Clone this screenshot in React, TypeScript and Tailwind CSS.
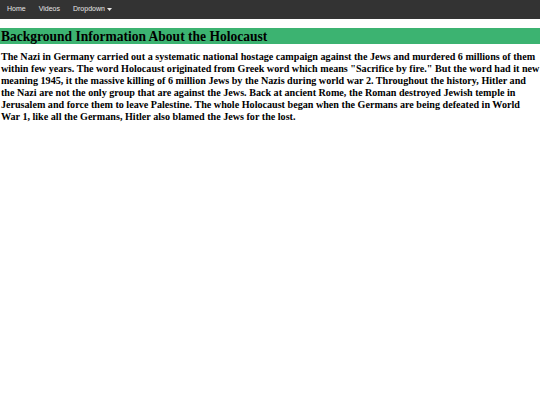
const lines = [
  'The Nazi in Germany carried out a systematic national hostage campaign against the Jews and murdered 6 millions of them',
  'within few years. The word Holocaust originated from Greek word which means "Sacrifice by fire." But the word had it new',
  'meaning 1945, it the massive killing of 6 million Jews by the Nazis during world war 2. Throughout the history, Hitler and',
  'the Nazi are not the only group that are against the Jews. Back at ancient Rome, the Roman destroyed Jewish temple in',
  'Jerusalem and force them to leave Palestine. The whole Holocaust began when the Germans are being defeated in World',
  'War 1, like all the Germans, Hitler also blamed the Jews for the lost.',
];

export default function App() {
  return (
    <div className="min-h-[405px] bg-white overflow-hidden">
      {/* Navbar */}
      <nav className="h-[19px] bg-[#333333] flex items-center px-[7px] gap-[13px] font-['Liberation_Sans',Arial,sans-serif] text-[7px] text-[#e6e6e6]">
        <span>Home</span>
        <span>Videos</span>
        <span className="flex items-center gap-[2px]">
          Dropdown
          <svg width="5" height="3" viewBox="0 0 5 3">
            <path d="M0 0h5L2.5 3z" fill="currentColor" />
          </svg>
        </span>
      </nav>

      {/* content is rendered a bit narrow, like the original */}
      <div className="w-[587px] origin-top-left scale-x-[0.92] pt-[9px] font-['Liberation_Serif','Times_New_Roman',serif] font-bold text-black">
        <h1 className="bg-[#3cb371] text-[14.7px] leading-[16px] pl-[1px]">
          Background Information About the Holocaust
        </h1>
        <p className="mt-[6px] pl-[1px] text-[11px] leading-[12px] whitespace-nowrap">
          {lines.map((l, i) => (
            <span key={i} className="block">
              {l}
            </span>
          ))}
        </p>
      </div>
    </div>
  );
}
